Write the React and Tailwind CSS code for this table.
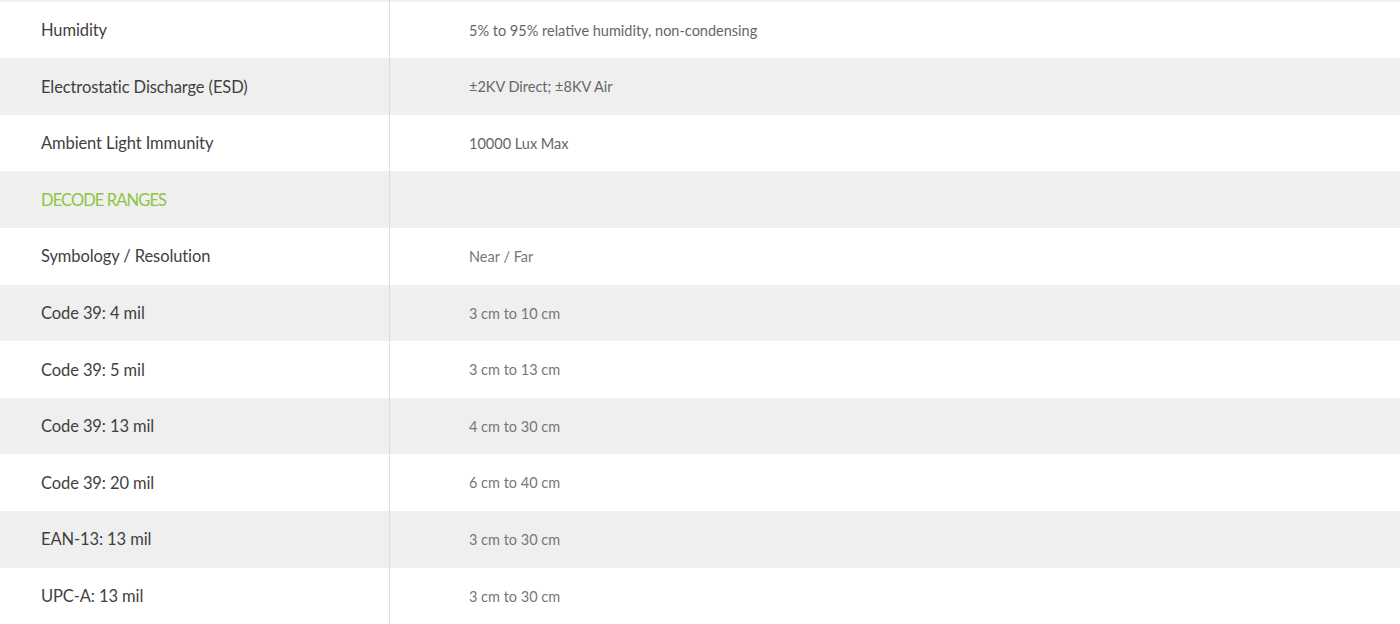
import React from 'react';

const rows = [
  { label: 'Humidity', value: '5% to 95% relative humidity, non-condensing' },
  { label: 'Electrostatic Discharge (ESD)', value: '±2KV Direct; ±8KV Air' },
  { label: 'Ambient Light Immunity', value: '10000 Lux Max' },
  { label: 'DECODE RANGES', value: '', heading: true },
  { label: 'Symbology / Resolution', value: 'Near / Far', alt: true },
  { label: 'Code 39: 4 mil', value: '3 cm to 10 cm', alt: true },
  { label: 'Code 39: 5 mil', value: '3 cm to 13 cm', alt: true },
  { label: 'Code 39: 13 mil', value: '4 cm to 30 cm', alt: true },
  { label: 'Code 39: 20 mil', value: '6 cm to 40 cm', alt: true },
  { label: 'EAN-13: 13 mil', value: '3 cm to 30 cm', alt: true },
  { label: 'UPC-A: 13 mil', value: '3 cm to 30 cm', alt: true },
];

const SpecRow = ({ label, value, heading, alt, shaded }) => (
  <div className={`flex h-[56.6px] ${shaded ? 'bg-[#efefef]' : 'bg-white'}`}>
    <div
      className={`w-[390px] shrink-0 flex items-center pl-[41px] pt-[1px] border-r border-[#dcdcdc] font-['Lato',sans-serif] text-[16.5px] ${
        heading ? 'text-[#8cc63f] tracking-[-0.9px]' : 'text-[#3f3f3f] tracking-[-0.1px]'
      }`}
    >
      {label}
    </div>
    <div
      className={`flex-1 flex items-center pl-[79px] pt-[1px] ${
        alt
          ? "font-['Lato',sans-serif] text-[14.5px] text-[#777]"
          : "font-['Lato',sans-serif] text-[14.5px] text-[#666]"
      }`}
    >
      {value}
    </div>
  </div>
);

export default function App() {
  return (
    <div className="w-[1400px] h-[624px] overflow-hidden bg-white">
      <div className="flex h-[1.7px] bg-[#efefef]">
        <div className="w-[390px] border-r border-[#dcdcdc]" />
      </div>
      {rows.map((r, i) => (
        <SpecRow key={r.label} {...r} shaded={i % 2 === 1} />
      ))}
    </div>
  );
}
